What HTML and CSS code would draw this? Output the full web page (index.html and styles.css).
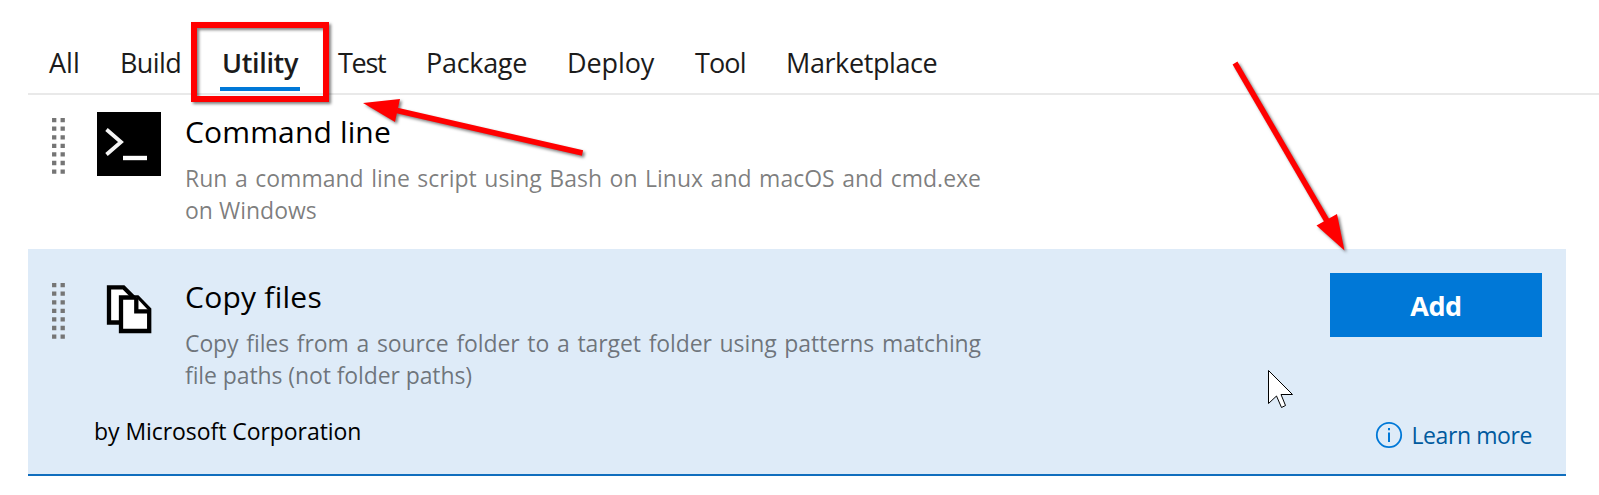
FILE: index.html
```html
<!DOCTYPE html>
<html lang="en">
<head>
<meta charset="utf-8">
<title>Add tasks</title>
<link rel="stylesheet" href="styles.css">
</head>
<body>
<svg class="defs" width="0" height="0" aria-hidden="true">
  <symbol id="grip" viewBox="0 0 14 57">
    <path d="M2.2 0V57M10.7 0V57" fill="none" stroke="currentColor" stroke-width="4.3" stroke-dasharray="4.3 4.27"/>
  </symbol>
</svg>
<nav class="tabs">
  <a class="tab tab-all"><span>All</span></a>
  <a class="tab tab-build"><span>Build</span></a>
  <a class="tab tab-utility active"><span>Utility</span></a>
  <a class="tab tab-test"><span>Test</span></a>
  <a class="tab tab-package"><span>Package</span></a>
  <a class="tab tab-deploy"><span>Deploy</span></a>
  <a class="tab tab-tool"><span>Tool</span></a>
  <a class="tab tab-market"><span>Marketplace</span></a>
</nav>
<main class="tasks">
  <section class="task first">
    <svg class="grip"><use href="#grip"/></svg>
    <svg class="icon" viewBox="0 0 64 64"><rect width="64" height="64"/><path d="M9.5 17.5L24 30L9.5 42.5" fill="none" stroke="#f4f4f4" stroke-width="3.8"/><path d="M26 46H50" stroke="#fff" stroke-width="4.4"/></svg>
    <div class="info">
      <h2 class="title title-cmd">Command line</h2>
      <p class="desc">Run a command line script using Bash on Linux and macOS and cmd.exe on Windows</p>
    </div>
  </section>
  <section class="task selected">
    <svg class="grip"><use href="#grip"/></svg>
    <svg class="icon" viewBox="0 0 64 64"><g fill="#fff" stroke="#000" stroke-width="4.3"><path d="M12 10.3H26.5L38 21.8V45.5H12Z"/><path d="M24 20.5H40.5L52.2 32.3V54H24V20.5Z"/><path d="M39.3 20.5V34.3H52.2"/></g></svg>
    <div class="info">
      <h2 class="title title-copy">Copy files</h2>
      <p class="desc">Copy files from a source folder to a target folder using patterns matching file paths (not folder paths)</p>
    </div>
    <button class="add">Add</button>
    <footer class="foot">
      <span class="author">by Microsoft Corporation</span>
      <a class="learn"><svg class="i" viewBox="0 0 28 28"><circle cx="14" cy="14" r="12.2" fill="none" stroke="#0078d7" stroke-width="1.8"/><path d="M14 11.5V21M14 7V9.2" stroke="#0078d7" stroke-width="2"/></svg><span>Learn more</span></a>
    </footer>
  </section>
</main>
<svg class="notes" viewBox="0 0 1599 495">
  <g class="red">
    <rect x="194" y="25" width="132" height="74" fill="none" stroke="#f00" stroke-width="6"/>
    <path d="M582.5 153L397 110.5" stroke="#f00" stroke-width="5.6"/>
    <path d="M363 103L400 99L395 122Z" fill="#f00"/>
    <path d="M1235 63L1327 221" stroke="#f00" stroke-width="5.6"/>
    <path d="M1344.5 250.5L1316.5 225.5L1337 214Z" fill="#f00"/>
  </g>
  <path d="M1268.5 370.5V403.5L1276.5 396L1281.5 407.5L1285.5 405.5L1281 394.5H1292.5Z" fill="#fff" stroke="#000" stroke-width="1"/>
</svg>
</body>
</html>
```
FILE: styles.css
```css
body {
  margin: 0;
  width: 1599px;
  height: 495px;
  overflow: hidden;
  position: relative;
  background: #fff;
  color: #000;
  font-family: "Open Sans", "Noto Sans", sans-serif;
}
.defs { display: block; }
.tabs {
  display: grid;
  grid-template-columns: 71px 100px 118px 88px 141px 128px 91px 200px;
  height: 55px;
  margin-left: 28px;
  padding: 38px 0 0 21px;
  border-bottom: 2px solid #e9e9e9;
  color: #1b1b1b;
  font-size: 27px;
  line-height: 50px;
}
.tab { letter-spacing: -0.5px; white-space: nowrap; }
.tab-all { letter-spacing: 0; }
.tab-build { letter-spacing: -0.6px; }
.tab-utility { letter-spacing: -0.35px; }
.tab-test { letter-spacing: -1.3px; }
.tab-package { letter-spacing: -0.3px; }
.tab-deploy { letter-spacing: -0.1px; }
.tab-tool { letter-spacing: -0.9px; }
.tab-market { letter-spacing: -0.4px; }
.active { font-weight: 600; }
.active span {
  display: block;
  width: 78px;
  height: 49px;
  padding-left: 2px;
  border-bottom: 4px solid #0078d7;
}
.tasks { height: 390px; overflow: hidden; }
.task {
  display: grid;
  grid-template-columns: 45px 88px 796px 1fr;
  align-items: start;
  align-content: start;
  box-sizing: border-box;
  width: 1538px;
  margin-left: 28px;
  padding: 28px 24px 0;
}
.first { height: 165px; margin-top: -11px; }
.selected {
  height: 227px;
  background: #deebf8;
  border-bottom: 2px solid #106ebe;
}
.grip { width: 14px; height: 57px; margin-top: 6px; color: #757575; }
.icon { width: 64px; height: 64px; }
.title { margin: 0 0 11px; font-size: 30px; font-weight: 400; line-height: 39px; }
.title-cmd { letter-spacing: 0.15px; }
.title-copy { letter-spacing: 0.25px; }
.desc {
  margin: 0;
  color: rgba(0, 0, 0, 0.52);
  font-size: 23px;
  line-height: 32px;
  text-align: justify;
}
.selected .desc { letter-spacing: -0.1px; }
.add {
  justify-self: end;
  width: 212px;
  height: 64px;
  margin-top: -4px;
  padding: 0;
  border: 0;
  background: #0078d7;
  color: #fff;
  font: 700 27px "Open Sans", sans-serif;
  letter-spacing: -0.5px;
}
.foot {
  grid-column: 1 / -1;
  display: flex;
  justify-content: space-between;
  margin: 24px 10px 0 42px;
  font-size: 23px;
  line-height: 32px;
}
.author { letter-spacing: -0.06px; }
.learn { display: flex; align-items: center; gap: 8px; margin-top: 4px; color: #005a9e; letter-spacing: -0.4px; }
.i { width: 28px; height: 28px; }
.notes { position: absolute; inset: 0; width: 1599px; height: 495px; }
.red { filter: drop-shadow(2.5px 2.5px 1.5px rgba(0, 0, 0, 0.5)); }
```
